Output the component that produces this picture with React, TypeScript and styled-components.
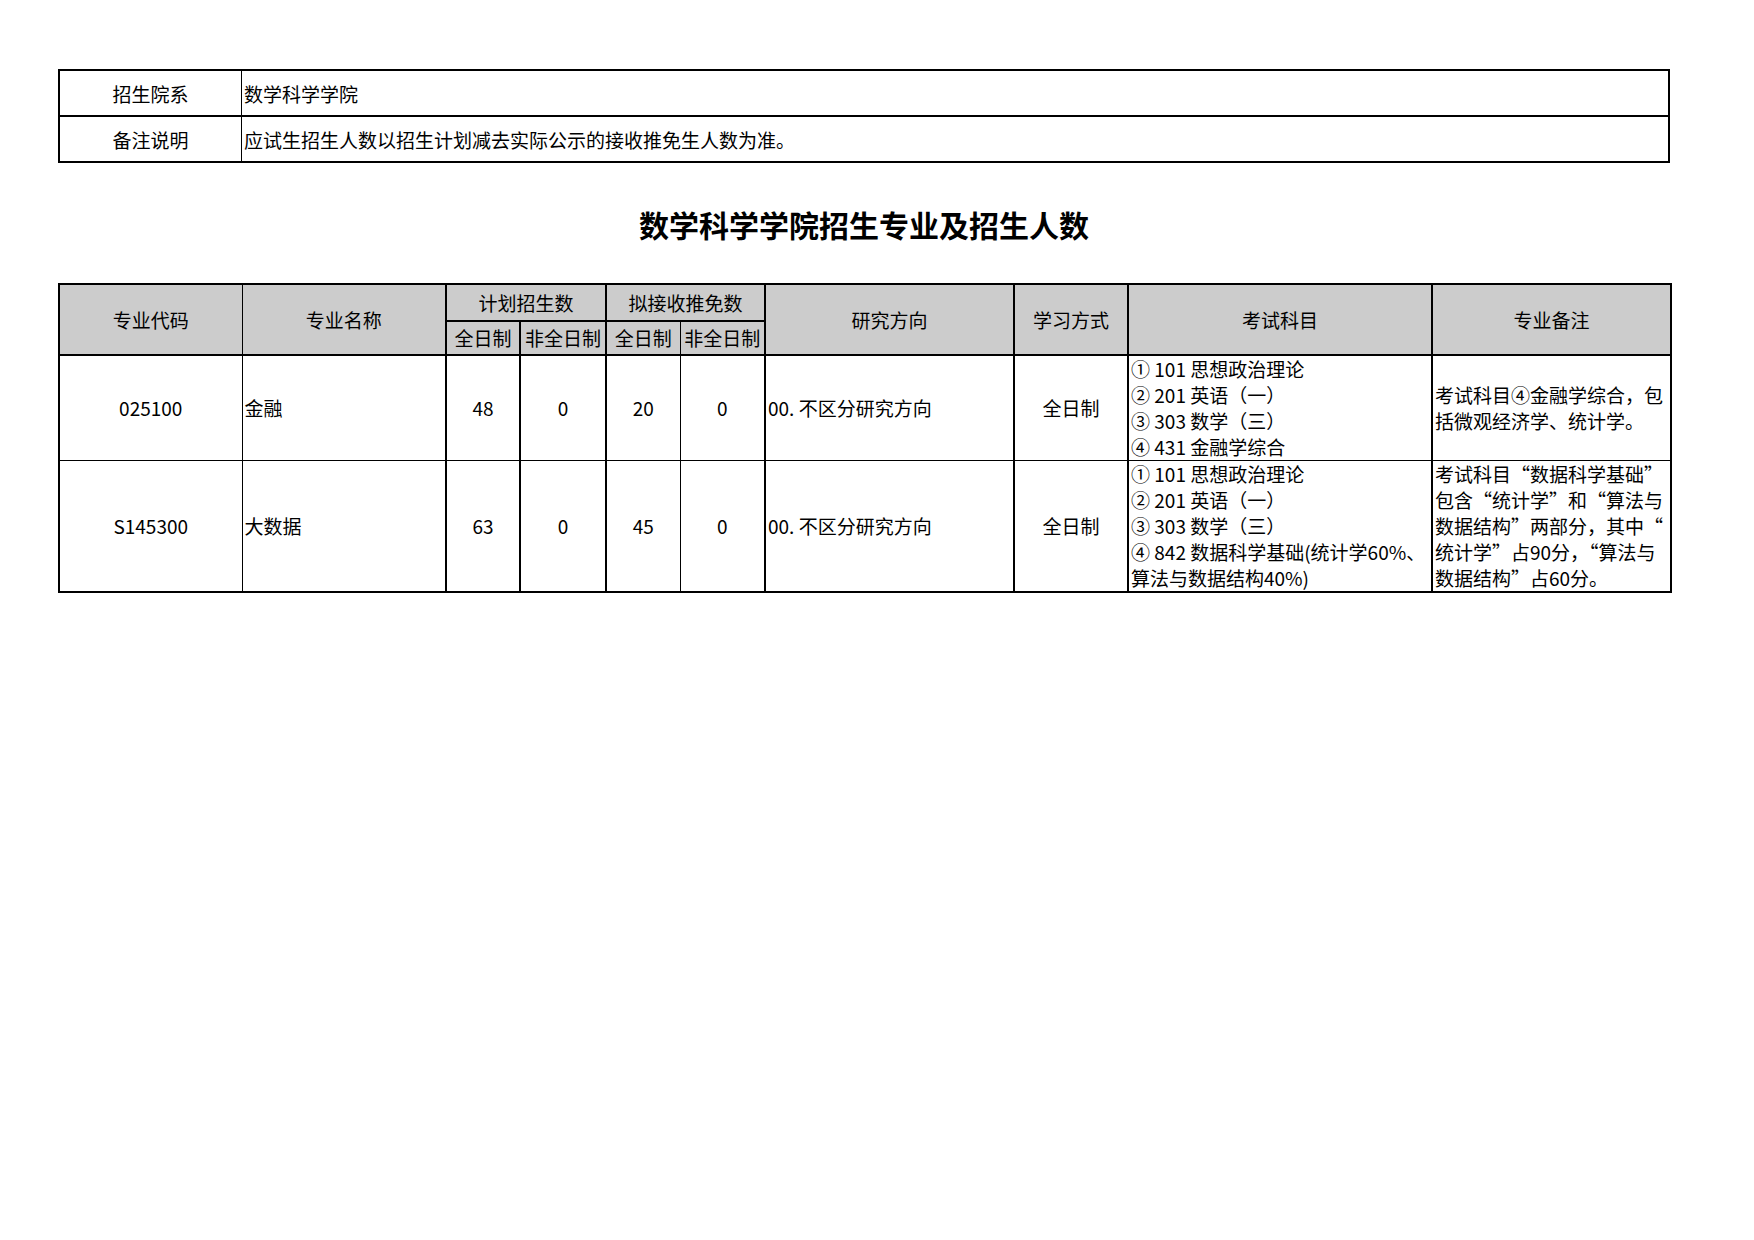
import React from 'react';
import styled, { createGlobalStyle, css } from 'styled-components';

const GlobalStyle = createGlobalStyle`
  html, body {
    margin: 0;
    padding: 0;
    background: #ffffff;
  }

  body {
    font-family: 'Noto Sans CJK SC', 'Noto Sans', sans-serif;
    color: #000000;
  }
`;

const Page = styled.div`
  width: 1754px;
  min-height: 1240px;
  padding: 69px 0 0 58px;
  box-sizing: border-box;
`;

const Sheet = styled.div`
  width: 1612px;
`;

const InfoTable = styled.table`
  width: 100%;
  border-collapse: collapse;
  table-layout: fixed;
  border: 2px solid #000;
  font-size: 19px;
`;

const InfoLabel = styled.td`
  width: 181px;
  height: 44px;
  padding: 0;
  text-align: center;
  border-right: 1px solid #000;
  border-bottom: 2px solid #000;
`;

const InfoValue = styled.td`
  height: 44px;
  padding: 0 2px;
  text-align: left;
  white-space: nowrap;
  border-bottom: 2px solid #000;
`;

const Title = styled.h1`
  margin: 0;
  padding: 41px 0 39px;
  line-height: 40px;
  font-size: 30px;
  font-weight: 700;
  text-align: center;
`;

const EnrollTable = styled.table`
  width: 100%;
  border-collapse: collapse;
  table-layout: fixed;
  border: 2px solid #000;
  font-size: 19px;
  line-height: 26px;
`;

const Col = styled.col<{ $w: number }>`
  width: ${({ $w }) => $w}px;
`;

type Edge = 'thin' | 'thick';

const edge = (e?: Edge) => (e === 'thin' ? '1px solid #000' : '2px solid #000');

const HeadCell = styled.th<{ $h?: number; $left?: Edge; $right?: Edge }>`
  background: #cccccc;
  font-weight: 400;
  padding: 0;
  text-align: center;
  vertical-align: middle;
  white-space: nowrap;
  height: ${({ $h }) => ($h ? `${$h}px` : 'auto')};
  border: 2px solid #000;
  ${({ $left }) => $left && css`border-left: ${edge($left)};`}
  ${({ $right }) => $right && css`border-right: ${edge($right)};`}
`;

const Cell = styled.td<{ $align?: 'left' | 'center'; $left?: Edge; $right?: Edge }>`
  padding: 0 2px;
  text-align: ${({ $align }) => $align || 'center'};
  vertical-align: middle;
  white-space: nowrap;
  border-top: 1px solid #000;
  border-bottom: 1px solid #000;
  border-left: ${({ $left }) => edge($left)};
  border-right: ${({ $right }) => edge($right)};
`;

const BodyRow = styled.tr<{ $h: number }>`
  height: ${({ $h }) => $h}px;
`;

const Lines = styled.div`
  display: flex;
  flex-direction: column;
`;

const Line = styled.span`
  display: block;
`;

interface Major {
  code: string;
  name: string;
  planFull: number;
  planPart: number;
  exemptFull: number;
  exemptPart: number;
  direction: string;
  mode: string;
  exams: string[];
  notes: string[];
  height: number;
}

const majors: Major[] = [
  {
    code: '025100',
    name: '金融',
    planFull: 48,
    planPart: 0,
    exemptFull: 20,
    exemptPart: 0,
    direction: '00. 不区分研究方向',
    mode: '全日制',
    exams: ['① 101 思想政治理论', '② 201 英语（一）', '③ 303 数学（三）', '④ 431 金融学综合'],
    notes: ['考试科目④金融学综合，包', '括微观经济学、统计学。'],
    height: 104,
  },
  {
    code: 'S145300',
    name: '大数据',
    planFull: 63,
    planPart: 0,
    exemptFull: 45,
    exemptPart: 0,
    direction: '00. 不区分研究方向',
    mode: '全日制',
    exams: [
      '① 101 思想政治理论',
      '② 201 英语（一）',
      '③ 303 数学（三）',
      '④ 842 数据科学基础(统计学60%、',
      '算法与数据结构40%)',
    ],
    notes: [
      '考试科目“数据科学基础”',
      '包含“统计学”和“算法与',
      '数据结构”两部分，其中“',
      '统计学”占90分，“算法与',
      '数据结构”占60分。',
    ],
    height: 131,
  },
];

const colWidths = [183, 204, 74, 86, 74, 85, 249, 114, 304, 239];

const App: React.FC = () => (
  <>
    <GlobalStyle />
    <Page>
      <Sheet>
        <InfoTable>
          <tbody>
            <tr>
              <InfoLabel>招生院系</InfoLabel>
              <InfoValue>数学科学学院</InfoValue>
            </tr>
            <tr>
              <InfoLabel>备注说明</InfoLabel>
              <InfoValue>应试生招生人数以招生计划减去实际公示的接收推免生人数为准。</InfoValue>
            </tr>
          </tbody>
        </InfoTable>

        <Title>数学科学学院招生专业及招生人数</Title>

        <EnrollTable>
          <colgroup>
            {colWidths.map((w, i) => (
              <Col $w={w} key={i} />
            ))}
          </colgroup>
          <thead>
            <tr>
              <HeadCell rowSpan={2} $right="thin">专业代码</HeadCell>
              <HeadCell rowSpan={2} $left="thin">专业名称</HeadCell>
              <HeadCell colSpan={2} $h={35}>计划招生数</HeadCell>
              <HeadCell colSpan={2}>拟接收推免数</HeadCell>
              <HeadCell rowSpan={2}>研究方向</HeadCell>
              <HeadCell rowSpan={2}>学习方式</HeadCell>
              <HeadCell rowSpan={2}>考试科目</HeadCell>
              <HeadCell rowSpan={2}>专业备注</HeadCell>
            </tr>
            <tr>
              <HeadCell $h={32}>全日制</HeadCell>
              <HeadCell>非全日制</HeadCell>
              <HeadCell $right="thin">全日制</HeadCell>
              <HeadCell $left="thin">非全日制</HeadCell>
            </tr>
          </thead>
          <tbody>
            {majors.map((m) => (
              <BodyRow $h={m.height} key={m.code}>
                <Cell $right="thin">{m.code}</Cell>
                <Cell $align="left" $left="thin">
                  {m.name}
                </Cell>
                <Cell>{m.planFull}</Cell>
                <Cell>{m.planPart}</Cell>
                <Cell $right="thin">{m.exemptFull}</Cell>
                <Cell $left="thin">{m.exemptPart}</Cell>
                <Cell $align="left">{m.direction}</Cell>
                <Cell>{m.mode}</Cell>
                <Cell $align="left">
                  <Lines>
                    {m.exams.map((e) => (
                      <Line key={e}>{e}</Line>
                    ))}
                  </Lines>
                </Cell>
                <Cell $align="left">
                  <Lines>
                    {m.notes.map((n) => (
                      <Line key={n}>{n}</Line>
                    ))}
                  </Lines>
                </Cell>
              </BodyRow>
            ))}
          </tbody>
        </EnrollTable>
      </Sheet>
    </Page>
  </>
);

export default App;
